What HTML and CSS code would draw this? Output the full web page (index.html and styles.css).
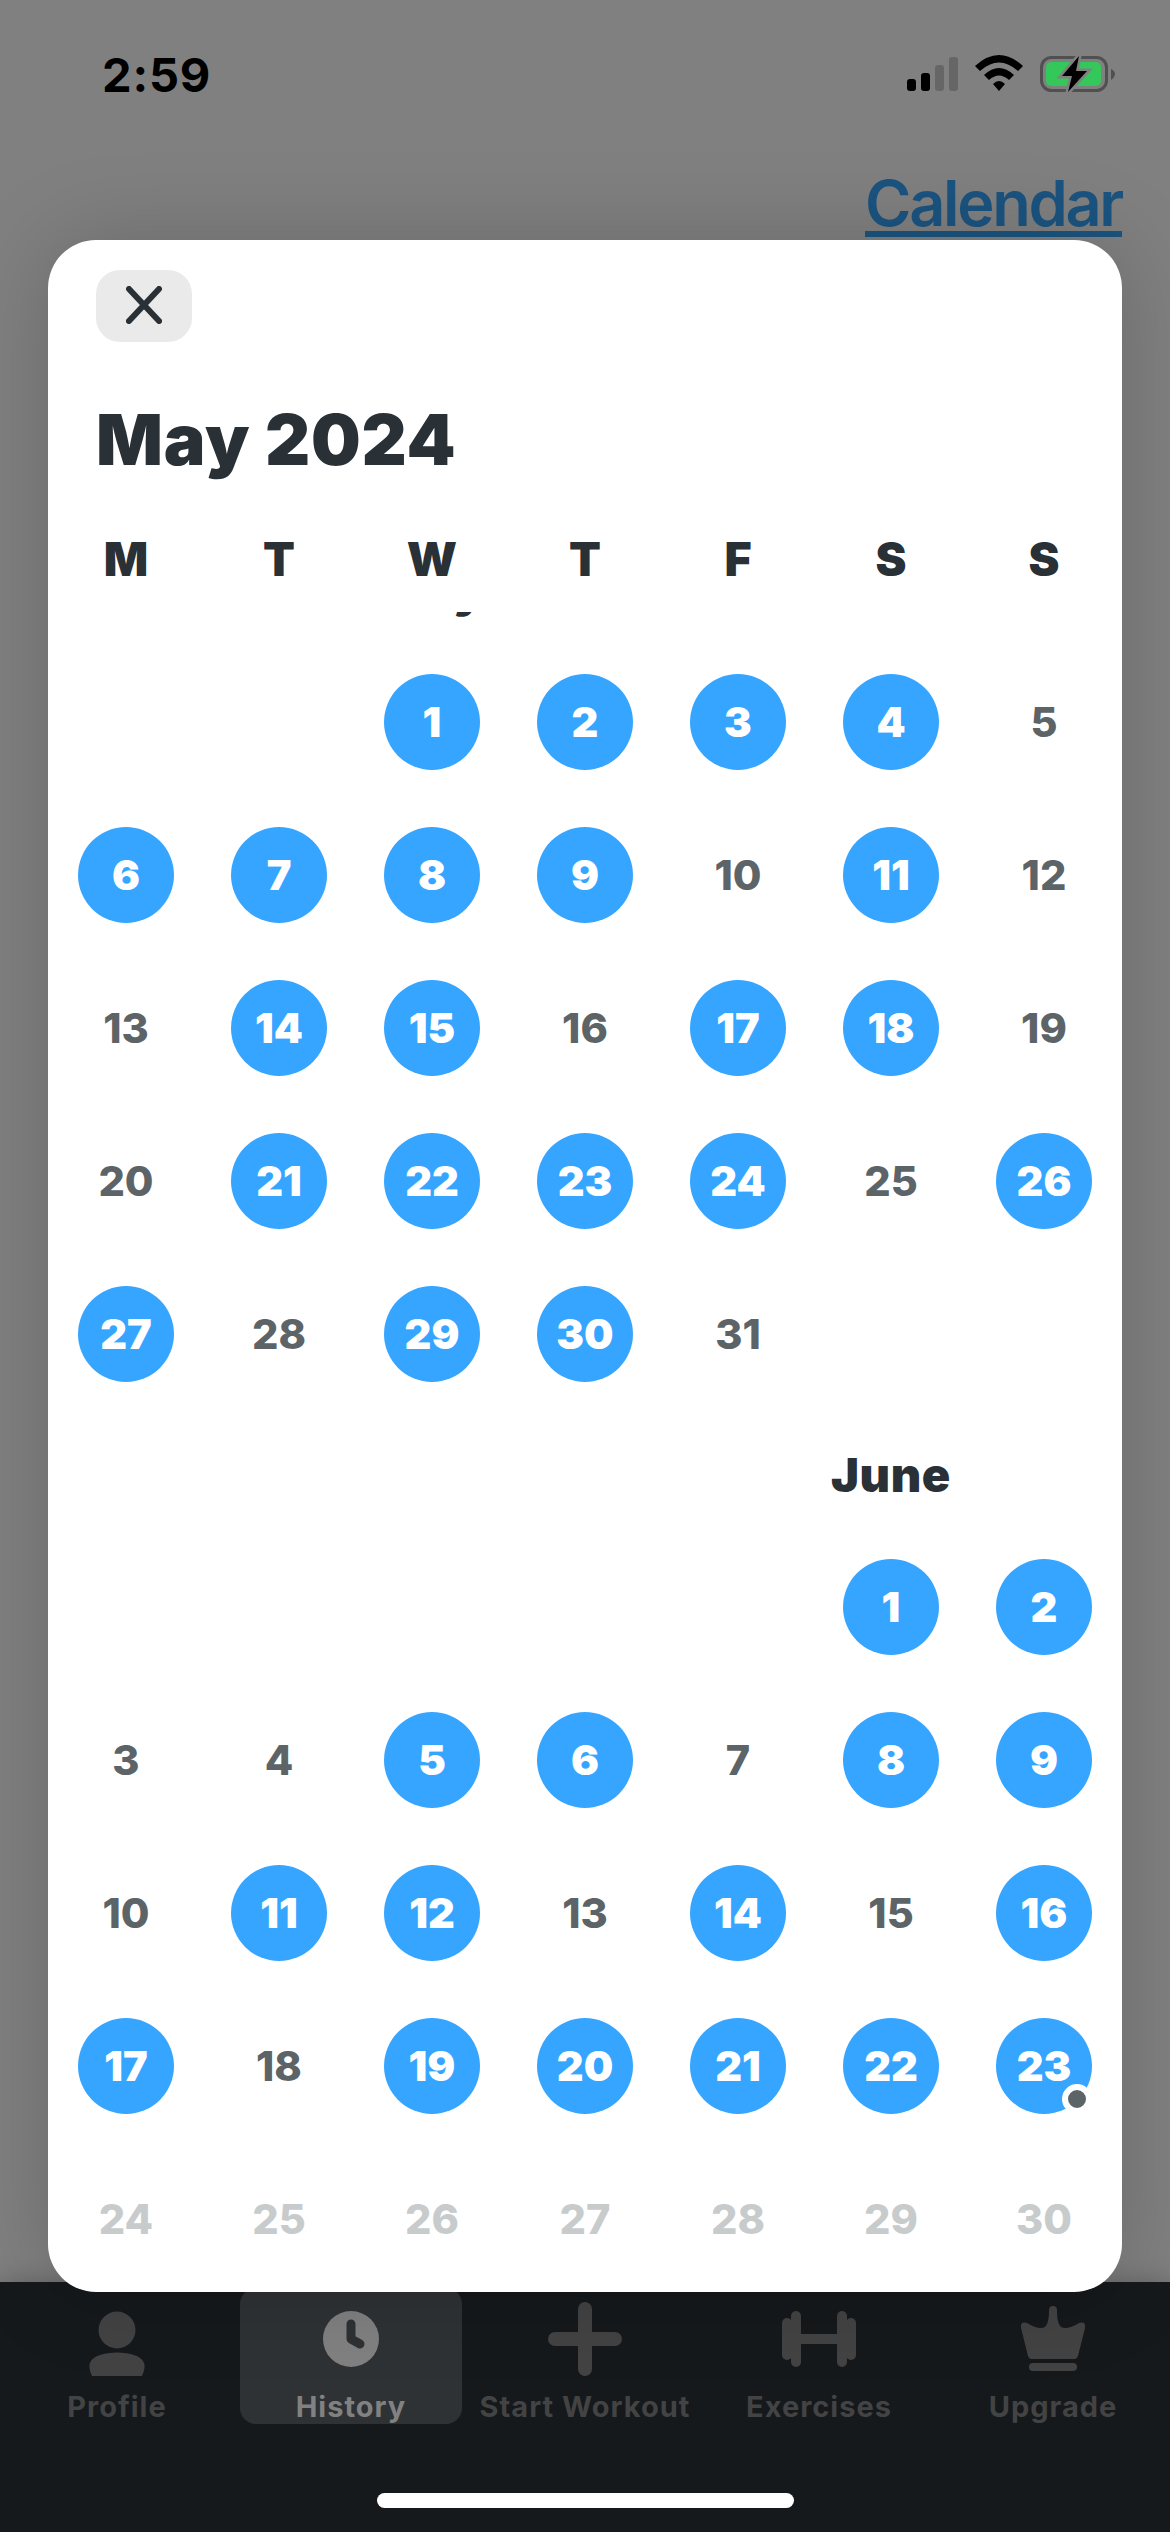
FILE: index.html
```html
<!DOCTYPE html>
<html lang="en">
<head>
    <meta charset="utf-8">
    <title>Workout Calendar</title>
    <link rel="stylesheet" href="styles.css">
</head>
<body>
    <div class="screen">
        <header class="status-bar">
            <span class="time">2:59</span>
            <svg class="status-icons" width="210" height="40" viewBox="0 0 210 40">
                <rect x="2" y="24" width="9" height="12" rx="3"/>
                <rect x="16" y="18" width="9" height="18" rx="3"/>
                <rect x="30" y="10" width="9" height="26" rx="3" fill="#666"/>
                <rect x="44" y="2" width="9" height="34" rx="3" fill="#666"/>
                <path d="M70 11Q94-11 118 11L113 16Q94-1 75 16Z M79 20Q94 6 109 20L104 25Q94 16 84 25Z M88 29Q94 23 100 29L94 36Z"/>
                <rect x="136.500" y="2.500" width="65" height="33" rx="10" fill="none" stroke="#505050" stroke-width="3"/>
                <rect x="141" y="7" width="55" height="24" rx="5" fill="#34c759"/>
                <path d="M206 14Q210 16 210 19T206 25Z" fill="#505050"/>
                <path class="bolt" d="M174 1L157 21H167L163 37L182 16H171Z"/>
            </svg>
        </header>
        <div class="page-head"><a class="calendar-link">Calendar</a></div>

        <main class="modal">
            <button class="close">
                <svg width="36" height="38" viewBox="0 0 36 38"><path d="M3 3L33 35M33 3L3 35"/></svg>
            </button>
            <h1>May 2024</h1>
            <div class="weekdays">
                <span>M</span><span>T</span><span>W</span><span>T</span><span>F</span><span>S</span><span>S</span>
            </div>
            <div class="months" id="months"></div>
        </main>

        <nav class="tab-bar">
            <div class="tab">
                <svg width="64" height="76" viewBox="0 0 64 76"><circle cx="32" cy="20" r="18.500"/><path d="M7 66Q3 57 5 53C9 39 55 39 59 53Q61 57 57 66Z"/></svg>
                <span>Profile</span>
            </div>
            <div class="tab active">
                <svg width="64" height="76" viewBox="0 0 64 76"><circle cx="32" cy="29" r="28"/><path class="hands" d="M32 14V29L41 34"/></svg>
                <span>History</span>
            </div>
            <div class="tab">
                <svg width="76" height="76" viewBox="0 0 76 76"><path class="plus" d="M38 -1V59M8 29H68"/></svg>
                <span>Start Workout</span>
            </div>
            <div class="tab">
                <svg width="76" height="76" viewBox="0 0 76 76"><rect x="1" y="8" width="10" height="42" rx="5"/><rect x="10" y="1" width="10" height="56" rx="5"/><rect x="18" y="24" width="40" height="10"/><rect x="56" y="1" width="10" height="56" rx="5"/><rect x="65" y="8" width="10" height="42" rx="5"/></svg>
                <span>Exercises</span>
            </div>
            <div class="tab">
                <svg width="66" height="76" viewBox="0 0 66 76"><path d="M29 0Q29-4 33-4T37 0C37 12 39 18 45 18Q51 18 59 13Q66 11 65 18L58 46Q57 49 55 49H11Q9 49 8 46L1 18Q0 11 7 13Q15 18 21 18C27 18 29 12 29 0Z"/><rect x="9" y="53" width="48" height="8" rx="4"/></svg>
                <span>Upgrade</span>
            </div>
        </nav>
        <div class="home-indicator"></div>
    </div>

    <script>
        const months = [
            { name: 'May', offset: 2, days: 31, trained: [1, 2, 3, 4, 6, 7, 8, 9, 11, 14, 15, 17, 18, 21, 22, 23, 24, 26, 27, 29, 30] },
            { name: 'June', offset: 5, days: 30, trained: [1, 2, 5, 6, 8, 9, 11, 12, 14, 16, 17, 19, 20, 21, 22, 23], today: 23 }
        ];

        let html = '';
        months.forEach(month => {
            html += '<div class="month">';
            for (let i = 0; i < month.offset; i++) html += '<i></i>';
            html += `<h2>${month.name}</h2>`;
            for (let i = month.offset + 1; i < 7; i++) html += '<i></i>';
            for (let i = 0; i < month.offset; i++) html += '<i></i>';
            for (let day = 1; day <= month.days; day++) {
                let cls = 'day';
                if (month.trained.includes(day)) cls += ' trained';
                if (month.today && day > month.today) cls += ' future';
                if (day === month.today) cls += ' today';
                html += `<div class="${cls}">${day}</div>`;
            }
            html += '</div>';
        });
        document.getElementById('months').innerHTML = html;
    </script>
</body>
</html>
```
FILE: styles.css
```css
* {
    box-sizing: border-box;
}

body {
    margin: 0;
    background: #808080;
    font-family: Inter, sans-serif;
    color: #293036;
}

.screen {
    width: 1170px;
    height: 2532px;
    overflow: hidden;
    position: relative;
    display: flex;
    flex-direction: column;
}

.status-bar {
    height: 150px;
    padding: 55px 55px 0 102px;
    display: flex;
    justify-content: space-between;
    align-items: flex-start;
    color: #000;
}

.time {
    font-size: 47px;
    line-height: 40px;
    font-weight: 700;
    letter-spacing: 0.8px;
}

.bolt {
    stroke: #808080;
    stroke-width: 5px;
    paint-order: stroke;
}

.page-head {
    height: 90px;
    padding: 14px 48px 0;
    text-align: right;
}

.calendar-link {
    display: inline-block;
    height: 73px;
    border-bottom: 6px solid #1b5480;
    color: #1b5480;
    font-size: 63px;
    line-height: 78px;
    font-weight: 600;
    letter-spacing: -2.3px;
}

.modal {
    position: relative;
    z-index: 1;
    width: 1074px;
    height: 2052px;
    margin: 0 auto;
    padding-top: 30px;
    overflow: hidden;
    background: #fff;
    border-radius: 48px;
    box-shadow: 0 0 90px rgba(0,0,10,0.18);
}

.close {
    display: flex;
    align-items: center;
    justify-content: center;
    width: 96px;
    height: 72px;
    margin-left: 48px;
    padding: 0 0 2px;
    border: none;
    border-radius: 24px;
    background: #eaeaea;
}

.close path {
    stroke: #293036;
    stroke-width: 6px;
    stroke-linecap: round;
}

h1 {
    margin: 53px 0 0 48px;
    font-size: 70px;
    line-height: 90px;
    font-weight: 900;
    letter-spacing: 0.8px;
}

.weekdays {
    display: grid;
    grid-template-columns: repeat(7, 153px);
    justify-content: center;
    height: 127px;
    padding-top: 44px;
    text-align: center;
    font-size: 46.500px;
    line-height: 60px;
    font-weight: 900;
}

.months {
    height: 1680px;
    overflow: hidden;
}

.month {
    display: grid;
    grid-template-columns: repeat(7, 153px);
    grid-template-rows: 120px;
    grid-auto-rows: 153px;
    justify-content: center;
    align-items: center;
    justify-items: center;
}

.month:first-child {
    margin-top: -87px;
}

h2 {
    margin: 10px 0 0;
    font-size: 47px;
    line-height: 60px;
    font-weight: 900;
    letter-spacing: 0.6px;
}

.day {
    position: relative;
    width: 96px;
    line-height: 96px;
    border-radius: 50%;
    text-align: center;
    font-size: 41.500px;
    font-weight: 800;
    color: #5d6468;
}

.trained {
    background: #36a5ff;
    color: #fff;
    font-weight: 900;
}

.future {
    color: #c8cbcc;
}

.today::after {
    content: "";
    position: absolute;
    right: 0;
    bottom: 0;
    width: 18px;
    height: 18px;
    border: 6px solid #fff;
    border-radius: 50%;
    background: #5d6468;
}

.tab-bar {
    height: 250px;
    margin-top: -10px;
    background: #15191c;
    box-shadow: 0 0 24px rgba(0,0,0,0.25);
    display: grid;
    grid-template-columns: repeat(5, 1fr);
    justify-items: center;
}

.tab {
    width: 222px;
    height: 136px;
    margin-top: 6px;
    padding-top: 22px;
    display: flex;
    flex-direction: column;
    align-items: center;
    border-radius: 16px;
    color: #434344;
    font-size: 29px;
    line-height: 42px;
    font-weight: 700;
    letter-spacing: 1px;
    white-space: nowrap;
}

.tab svg {
    flex: none;
    fill: currentColor;
    overflow: visible;
}

.tab.active {
    background: #2f3235;
    color: #818181;
}

.hands {
    fill: none;
    stroke: #2f3235;
    stroke-width: 9px;
    stroke-linecap: round;
    stroke-linejoin: round;
}

.plus {
    stroke: currentColor;
    stroke-width: 14px;
    stroke-linecap: round;
}

.home-indicator {
    position: absolute;
    left: 377px;
    bottom: 24px;
    width: 417px;
    height: 15px;
    border-radius: 8px;
    background: #fff;
}
```
